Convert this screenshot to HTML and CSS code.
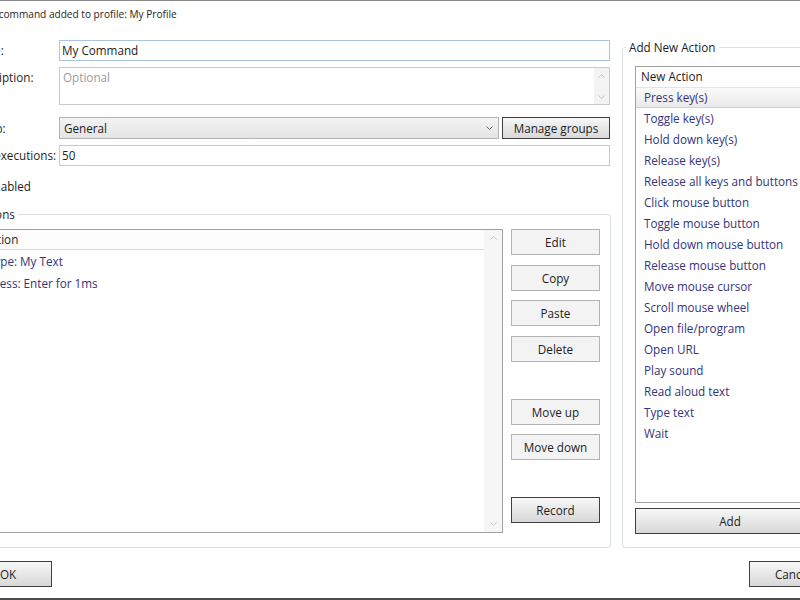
FILE: index.html
```html
<!DOCTYPE html>
<html lang="en">
<head>
<meta charset="utf-8">
<title>New Command</title>
<link rel="stylesheet" href="styles.css">
</head>
<body>
<div class="window">
  <div class="dialog">
    <p class="info">New command added to profile: My Profile</p>
    <div class="main">
      <div class="left">
        <div class="form">
          <span class="lbl">Name:</span>
          <div class="field name"><span>My Command</span></div>

          <span class="lbl">Description:</span>
          <div class="field desc">
            <span class="ph">Optional</span>
            <div class="vscroll">
              <svg width="7" height="4" viewBox="0 0 7 4"><path d="M0.5 3.5 L3.5 0.5 L6.5 3.5" fill="none" stroke="#c4c4c4"/></svg>
              <svg width="7" height="4" viewBox="0 0 7 4"><path d="M0.5 0.5 L3.5 3.5 L6.5 0.5" fill="none" stroke="#c4c4c4"/></svg>
            </div>
          </div>

          <span class="lbl lbl-group">Group:</span>
          <div class="group-row">
            <div class="combo">
              <span>General</span>
              <svg width="7" height="4" viewBox="0 0 7 4"><path d="M0.5 0.5 L3.5 3.5 L6.5 0.5" fill="none" stroke="#707070"/></svg>
            </div>
            <button class="btn def">Manage groups</button>
          </div>

          <span class="lbl">Max executions:</span>
          <div class="field"><span>50</span></div>
        </div>

        <div class="check"><span class="box"></span><span>Enabled</span></div>

        <fieldset class="frame actions">
          <legend>Actions</legend>
          <div class="act-body">
            <div class="list">
              <div class="list-content">
                <div class="list-head">Action</div>
                <div class="item">Type: My Text</div>
                <div class="item">Press: Enter for 1ms</div>
              </div>
              <div class="lscroll">
                <svg width="7" height="4" viewBox="0 0 7 4"><path d="M0.5 3.5 L3.5 0.5 L6.5 3.5" fill="none" stroke="#c8c8c8"/></svg>
                <svg width="7" height="4" viewBox="0 0 7 4"><path d="M0.5 0.5 L3.5 3.5 L6.5 0.5" fill="none" stroke="#c8c8c8"/></svg>
              </div>
            </div>
            <div class="btn-col">
              <button class="btn">Edit</button>
              <button class="btn mt10">Copy</button>
              <button class="btn mt9">Paste</button>
              <button class="btn mt10">Delete</button>
              <button class="btn mt37">Move up</button>
              <button class="btn mt9">Move down</button>
              <button class="btn def mt37">Record</button>
            </div>
          </div>
        </fieldset>
      </div>

      <fieldset class="frame addnew">
        <legend>Add New Action</legend>
        <div class="rlist">
          <div class="rhead">New Action</div>
          <div class="ritem sel">Press key(s)</div>
          <div class="ritem">Toggle key(s)</div>
          <div class="ritem">Hold down key(s)</div>
          <div class="ritem">Release key(s)</div>
          <div class="ritem">Release all keys and buttons</div>
          <div class="ritem">Click mouse button</div>
          <div class="ritem">Toggle mouse button</div>
          <div class="ritem">Hold down mouse button</div>
          <div class="ritem">Release mouse button</div>
          <div class="ritem">Move mouse cursor</div>
          <div class="ritem">Scroll mouse wheel</div>
          <div class="ritem">Open file/program</div>
          <div class="ritem">Open URL</div>
          <div class="ritem">Play sound</div>
          <div class="ritem">Read aloud text</div>
          <div class="ritem">Type text</div>
          <div class="ritem">Wait</div>
        </div>
        <button class="btn def add">Add</button>
      </fieldset>
    </div>

    <div class="footer">
      <button class="btn def wide">OK</button>
      <button class="btn def wide">Cancel</button>
    </div>
  </div>
</div>
</body>
</html>
```

FILE: styles.css
```css
html, body {
  margin: 0;
  padding: 0;
  height: 100%;
  overflow: hidden;
  background: #ffffff;
}

body {
  font-family: "Open Sans", "Noto Sans", sans-serif;
  font-size: 11.7px;
  line-height: 16px;
  color: #1e1e1e;
}

.window {
  height: 600px;
  box-sizing: border-box;
  border-top: 1px solid #8a8a8a;
  border-bottom: 2px solid #4d4d4d;
}

.dialog {
  margin-left: -37px;
  width: 875px;
}

.info {
  margin: 5px 0 17px 12px;
  font-size: 10.1px;
  white-space: nowrap;
}

.main {
  display: grid;
  grid-template-columns: 648px 216px;
  column-gap: 11px;
  align-items: start;
}

/* ---------- form ---------- */
.form {
  display: grid;
  grid-template-columns: 91px 551px;
  row-gap: 6px;
  margin: 1px 0 0 5px;
}

.lbl {
  padding-top: 2px;
  white-space: nowrap;
}

.lbl-group {
  padding-top: 3px;
  margin-top: 6px;
}

.field {
  box-sizing: border-box;
  height: 21px;
  border: 1px solid #c9c9c9;
  padding: 1px 2px;
  background: #fff;
}

.field.name {
  border-color: #a9c6de;
}

.field.desc {
  height: 38px;
  position: relative;
  padding-left: 3px;
}

.ph {
  color: #9b9b9b;
}

.vscroll {
  position: absolute;
  top: 0;
  right: 0;
  bottom: 0;
  width: 15px;
  background: #f3f3f3;
  display: flex;
  flex-direction: column;
  justify-content: space-between;
  align-items: center;
  padding: 6px 0 5px;
  box-sizing: border-box;
}

.group-row {
  display: grid;
  grid-template-columns: 440px 108px;
  column-gap: 3px;
  margin-top: 6px;
  height: 22px;
}

.combo {
  box-sizing: border-box;
  border: 1px solid #b4b4b4;
  background: linear-gradient(#f3f3f3, #e4e4e4);
  display: flex;
  align-items: center;
  justify-content: space-between;
  padding: 0 5px 0 4px;
}

.check {
  display: flex;
  align-items: center;
  gap: 5px;
  margin: 12px 0 0 6px;
  height: 16px;
}

.box {
  width: 13px;
  height: 13px;
  box-sizing: border-box;
  border: 1px solid #8f8f8f;
  background: linear-gradient(#f0f0f0, #fcfcfc);
}

/* ---------- group boxes ---------- */
.frame {
  margin: 0;
  border: 1px solid #dcdfe2;
  border-radius: 3px;
  min-width: 0;
}

.frame legend {
  padding: 0 3px;
  line-height: 16px;
}

.actions {
  margin-top: 12px;
  padding: 7px 10px 14px 14px;
}

.actions legend {
  margin-left: -6px;
}

.act-body {
  display: grid;
  grid-template-columns: 525px 89px;
  column-gap: 8px;
  align-items: start;
}

.list {
  height: 304px;
  box-sizing: border-box;
  border: 1px solid #a0a0a0;
  display: grid;
  grid-template-columns: 1fr 18px;
}

.list-head {
  height: 19px;
  border-bottom: 1px solid #d6d6d6;
  padding-left: 5px;
  line-height: 19px;
  background: #fdfdfd;
}

.item {
  height: 22px;
  line-height: 22px;
  padding-left: 9px;
  color: #34347c;
  white-space: nowrap;
}

.lscroll {
  background: #f6f6f6;
  display: flex;
  flex-direction: column;
  justify-content: space-between;
  align-items: center;
  padding: 6px 0 6px;
}

.btn-col {
  display: flex;
  flex-direction: column;
}

.mt9 { margin-top: 9px; }
.mt10 { margin-top: 10px; }
.mt37 { margin-top: 37px; }

/* ---------- buttons ---------- */
.btn {
  box-sizing: border-box;
  height: 26px;
  padding: 0;
  border: 1px solid #b3b3b3;
  background: #f3f3f3;
  font: inherit;
  color: #1e1e1e;
  white-space: nowrap;
}

.btn.def {
  border-color: #3f3f3f;
  background: linear-gradient(#f7f7f7, #e9e9e9 45%, #d8d8d8);
}

.group-row .btn {
  height: 22px;
}

/* ---------- right pane ---------- */
.addnew {
  padding: 11px 12px 13px 12px;
}

.addnew legend {
  margin-left: -9px;
}

.rlist {
  height: 437px;
  box-sizing: border-box;
  border: 1px solid #a0a0a0;
  width: 190px;
}

.rhead {
  height: 20px;
  line-height: 19px;
  padding-left: 5px;
}

.ritem {
  height: 21px;
  line-height: 21px;
  padding-left: 8px;
  color: #34347c;
  white-space: nowrap;
}

.ritem.sel {
  box-sizing: border-box;
  border-top: 1px solid #e4e4e4;
  border-bottom: 1px solid #d2d2d2;
  line-height: 19px;
  background: linear-gradient(#fbfbfb, #e9e9e9);
}

.add {
  display: block;
  width: 190px;
  margin-top: 5px;
}

/* ---------- footer ---------- */
.footer {
  display: flex;
  justify-content: space-between;
  margin-top: 13px;
  padding: 0 1px;
}

.wide {
  width: 88px;
}
```
